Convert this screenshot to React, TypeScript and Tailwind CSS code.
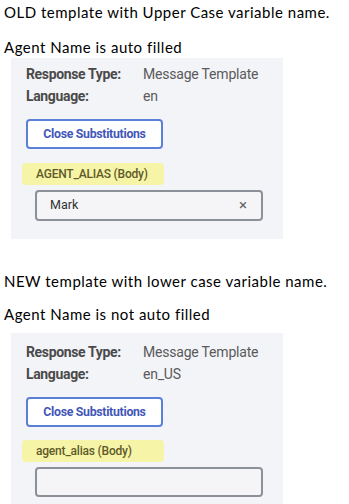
import React from "react";

function Panel({
  lang,
  label,
  value,
  topPad,
  bottomPad,
  labelGap,
  inputH,
}: {
  lang: string;
  label: string;
  value: string;
  topPad: string;
  bottomPad: string;
  labelGap: string;
  inputH: string;
}) {
  return (
    <div
      className={`ml-[11px] w-[272px] bg-[#f3f4f8] ${topPad} ${bottomPad}`}
      style={{ fontFamily: "Roboto, 'Liberation Sans', sans-serif" }}
    >
      <div className="pl-[15px] flex flex-col">
        <div className="flex h-[22px] items-center text-[14px] leading-none">
          <span className="w-[117px] font-bold text-[#4a4a4a] tracking-[-0.35px]">Response Type:</span>
          <span className="text-[#5a5a5a] tracking-[-0.2px]">Message Template</span>
        </div>
        <div className="flex h-[22px] items-center text-[14px] leading-none">
          <span className="w-[117px] font-bold text-[#4a4a4a] tracking-[-0.35px]">Language:</span>
          <span className="text-[#5a5a5a] tracking-[-0.2px]">{lang}</span>
        </div>
      </div>
      <div className="pl-[15px] mt-[12px]">
        <div className="w-[137px] h-[30px] rounded-[4px] border-2 border-[#5b80d8] bg-white flex items-center justify-center text-[12.3px] font-bold text-[#4356b8] tracking-[-0.3px]">
          Close Substitutions
        </div>
      </div>
      <div className={`pl-[11px] ${labelGap}`}>
        <div className="w-[142px] h-[22px] rounded-[4px] bg-[#f6f4a6] flex items-center pl-[14px] text-[12px] font-medium text-[#5f5a2a] tracking-[-0.2px]">
          {label}
        </div>
      </div>
      <div className="pl-[24px] mt-[5px]">
        <div className={`w-[228px] ${inputH} rounded-[4px] border-2 border-[#8c9099] bg-[#f5f5f7] flex items-center justify-between pl-[13px] pr-[14px]`}>
          <span className="text-[12.5px] text-[#333]">{value}</span>
          {value ? <span className="text-[15px] text-[#666] leading-none">×</span> : null}
        </div>
      </div>
    </div>
  );
}

export default function App() {
  const cal = { fontFamily: "Lato, 'Open Sans', sans-serif" };
  return (
    <div className="w-[349px] h-[504px] bg-white overflow-hidden relative">
      <div style={cal} className="text-[15px] tracking-[0.5px] text-black leading-none pl-[4px] pt-[5px]">
        <div className="h-[15px]">OLD template with Upper Case variable name.</div>
        <div className="h-[15px] mt-[20px]">Agent Name is auto filled</div>
      </div>
      <div className="mt-[3px]">
        <Panel lang="en" label="AGENT_ALIAS (Body)" value="Mark" topPad="pt-[5px]" bottomPad="pb-[18px]" labelGap="mt-[14px]" inputH="h-[31px]" />
      </div>
      <div style={cal} className="text-[15px] tracking-[0.5px] text-black leading-none pl-[4px] pt-[35px]">
        <div className="h-[15px]">NEW template with lower case variable name.</div>
        <div className="h-[15px] mt-[18px]">Agent Name is not auto filled</div>
      </div>
      <div className="mt-[11px]">
        <Panel lang="en_US" label="agent_alias (Body)" value="" topPad="pt-[8px]" bottomPad="pb-[10px]" labelGap="mt-[13px]" inputH="h-[30px]" />
      </div>
    </div>
  );
}
